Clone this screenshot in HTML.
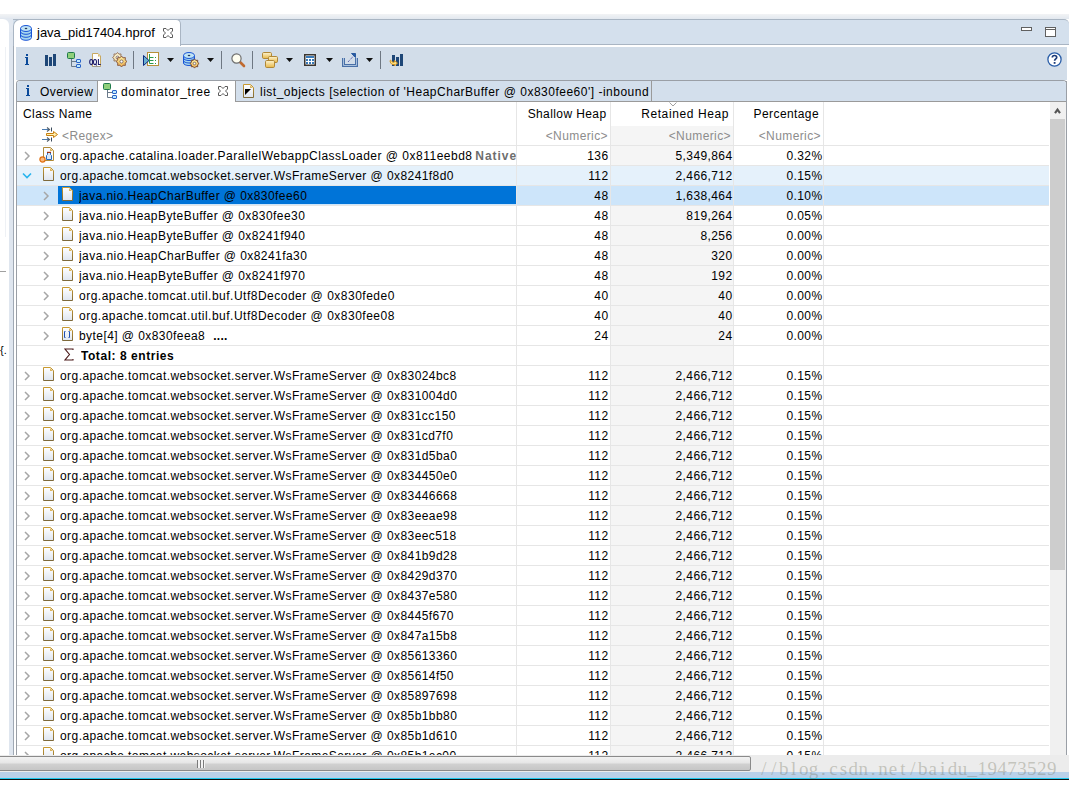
<!DOCTYPE html>
<html><head><meta charset="utf-8"><style>
html,body{margin:0;padding:0;}
body{width:1069px;height:789px;overflow:hidden;position:relative;background:#fff;font-family:"Liberation Sans", sans-serif;font-size:12px;color:#000;}
.a{position:absolute;}
.row{position:absolute;left:0;width:1049px;height:20px;}
.row::after{content:"";position:absolute;left:17px;right:0;top:19px;height:1px;background:#e6e6e6;}
.hot{background:linear-gradient(to right,transparent 17px,#e5f1fb 17px);}
.sel{background:linear-gradient(to right,transparent 17px,#cde5fa 17px);}
.t{position:absolute;top:0;height:20px;line-height:20px;white-space:nowrap;overflow:hidden;letter-spacing:0.43px;}
.n{position:absolute;top:0;height:20px;line-height:20px;white-space:nowrap;letter-spacing:0.4px;text-align:right;}
.f{position:absolute;height:20px;line-height:20px;white-space:nowrap;color:#8c8c8c;letter-spacing:0.4px;}
.h{position:absolute;height:20px;line-height:20px;white-space:nowrap;letter-spacing:0.4px;}
</style></head><body>
<svg width="0" height="0" style="position:absolute"><defs>
<linearGradient id="dfill" x1="0" y1="0" x2="0" y2="1"><stop offset="0" stop-color="#fff"/><stop offset="1" stop-color="#dfe6f0"/></linearGradient>
<linearGradient id="dstroke" x1="0" y1="0" x2="0" y2="1"><stop offset="0" stop-color="#c99a30"/><stop offset="1" stop-color="#7f6a3a"/></linearGradient>
</defs></svg>

<!-- top band -->
<div class="a" style="left:0;top:14px;width:1069px;height:5px;background:linear-gradient(#f2f3f5,#e2e8ef)"></div>
<!-- left strip -->
<div class="a" style="left:9px;top:19px;width:4px;height:736px;background:#dfe6ef"></div>
<div class="a" style="left:0;top:18px;width:13px;height:14px;background:#e2e8f0"></div><div class="a" style="left:-3px;top:19px;width:12px;height:736px;background:#fff;border-top-right-radius:6px"></div>
<div class="a" style="left:5px;top:47px;width:1px;height:190px;background:#eef1f5"></div>
<div class="a" style="left:0;top:271px;width:6px;height:1px;background:#a0a0a0"></div>
<div class="a" style="left:0;top:345px;font-size:11px;line-height:11px">{.</div>

<!-- editor tab bar -->
<div class="a" style="left:13px;top:19px;width:1056px;height:24px;background:#d4e0ed;border-top:1px solid #a9b5c3;border-bottom:1px solid #a9b5c3;border-top-right-radius:5px"></div>
<!-- editor content white with left border -->
<div class="a" style="left:13px;top:45px;width:1056px;height:710px;background:#fff;border-left:1px solid #a0a9b4;box-sizing:border-box"></div>
<!-- active editor tab -->
<div class="a" style="left:13px;top:19px;width:168px;height:27px;background:#fff;border:1px solid #a9b5c3;border-bottom:none;border-radius:7px 5px 0 0;box-sizing:border-box"></div>
<div class="a" style="left:37px;top:22px;height:22px;line-height:22px;font-size:13px;letter-spacing:0px">java_pid17404.hprof</div>

<!-- form area -->
<div class="a" style="left:16px;top:47px;width:1051px;height:33px;background:#d2dde9"></div>
<!-- inner tab folder -->
<div class="a" style="left:16px;top:80px;width:1051px;height:675px;border:1px solid #9a9fa6;border-bottom:none;border-radius:4px 4px 0 0;box-sizing:border-box;background:#fff"></div>
<div class="a" style="left:17px;top:81px;width:1049px;height:20px;background:#d3dfec;border-bottom:1px solid #9a9a9a;border-radius:3px 3px 0 0"></div>
<!-- tabs -->
<div class="a" style="left:97px;top:81px;width:1px;height:21px;background:#9a9a9a"></div>
<div class="a" style="left:98px;top:81px;width:137px;height:21px;background:#fff"></div>
<div class="a" style="left:235px;top:81px;width:1px;height:21px;background:#9a9a9a"></div>
<div class="a" style="left:651px;top:81px;width:1px;height:21px;background:#9a9a9a"></div>
<div class="a h" style="left:40px;top:82px">Overview</div>
<div class="a h" style="left:121px;top:82px;letter-spacing:0.65px">dominator_tree</div>
<div class="a h" style="left:260px;top:82px;letter-spacing:0.5px">list_objects [selection of 'HeapCharBuffer @ 0x830fee60'] -inbound</div>

<!-- table header -->
<div class="a" style="left:611px;top:126px;width:122px;height:629px;background:#f5f5f5"></div>
<div class="a" style="left:17px;top:145px;width:1032px;height:1px;background:#e6e6e6"></div>
<div class="h" style="left:23px;top:104px">Class Name</div>
<div class="h" style="left:517px;top:104px;width:89.5px;text-align:right">Shallow Heap</div>
<div class="h" style="left:611px;top:104px;width:118px;text-align:right;letter-spacing:0.6px">Retained Heap</div>
<div class="h" style="left:734px;top:104px;width:85px;text-align:right">Percentage</div>
<div class="f" style="left:62px;top:126px">&lt;Regex&gt;</div>
<div class="f" style="left:517px;top:126px;width:91px;text-align:right">&lt;Numeric&gt;</div>
<div class="f" style="left:611px;top:126px;width:120px;text-align:right">&lt;Numeric&gt;</div>
<div class="f" style="left:734px;top:126px;width:87px;text-align:right">&lt;Numeric&gt;</div>

<div class="a" style="left:0;top:0;width:1069px;height:755px;overflow:hidden">
<div class="row" style="top:146px">
<svg class="a" width="7" height="10" style="left:24px;top:5px"><path d="M1 1L5 5L1 9" fill="none" stroke="#a6a6a6" stroke-width="1.5"/></svg>
<svg class="a" width="15" height="16" style="left:39px;top:1px"><path d="M4.5 0.5H11.5L14.5 3.5V13.5H4.5Z" fill="#fbfcfe" stroke="#b08a38"/><path d="M11 1V4H14Z" fill="#dcb660"/><path d="M8 5.5H12" stroke="#a03010" stroke-width="1.4"/><path d="M8.5 6V7.5L7.5 8.5V12.5H12.5V8.5L11.5 7.5V6" fill="#dbe9f8" stroke="#2a6ab8"/><circle cx="3.5" cy="12.5" r="2.6" fill="#f8b880" stroke="#e07010" stroke-width="1.2"/></svg>
<div class="t" style="left:60px;width:456px;letter-spacing:0.5px;">org.apache.catalina.loader.ParallelWebappClassLoader @ 0x811eebd8 <b style="color:#6e6e6e;letter-spacing:0.95px;margin-left:-1px">Native</b></div>
<div class="n" style="left:517px;width:91.5px">136</div>
<div class="n" style="left:611px;width:121.5px">5,349,864</div>
<div class="n" style="left:734px;width:88.5px">0.32%</div>
</div>
<div class="row hot" style="top:166px">
<svg class="a" width="11" height="8" style="left:22px;top:6px"><path d="M1 1.5L5 5.5L9 1.5" fill="none" stroke="#28b4ee" stroke-width="1.6"/></svg>
<svg class="a" width="11" height="14" style="left:43px;top:1px"><path d="M0.5 0.5H7.5L10.5 3.5V13.5H0.5Z" fill="url(#dfill)" stroke="url(#dstroke)"/><path d="M7 1V4H10Z" fill="#dcb660"/></svg>
<div class="t" style="left:60px;width:456px;">org.apache.tomcat.websocket.server.WsFrameServer @ 0x8241f8d0</div>
<div class="n" style="left:517px;width:91.5px">112</div>
<div class="n" style="left:611px;width:121.5px">2,466,712</div>
<div class="n" style="left:734px;width:88.5px">0.15%</div>
</div>
<div class="row sel" style="top:186px">
<div class="a" style="left:58px;top:0;width:458px;height:18px;background:#0074d8"></div>
<svg class="a" width="7" height="10" style="left:43px;top:5px"><path d="M1 1L5 5L1 9" fill="none" stroke="#a6a6a6" stroke-width="1.5"/></svg>
<svg class="a" width="11" height="14" style="left:62px;top:1px"><path d="M0.5 0.5H7.5L10.5 3.5V13.5H0.5Z" fill="url(#dfill)" stroke="url(#dstroke)"/><path d="M7 1V4H10Z" fill="#dcb660"/></svg>
<div class="t" style="left:79px;width:437px;">java.nio.HeapCharBuffer @ 0x830fee60</div>
<div class="n" style="left:517px;width:91.5px">48</div>
<div class="n" style="left:611px;width:121.5px">1,638,464</div>
<div class="n" style="left:734px;width:88.5px">0.10%</div>
</div>
<div class="row" style="top:206px">
<svg class="a" width="7" height="10" style="left:43px;top:5px"><path d="M1 1L5 5L1 9" fill="none" stroke="#a6a6a6" stroke-width="1.5"/></svg>
<svg class="a" width="11" height="14" style="left:62px;top:1px"><path d="M0.5 0.5H7.5L10.5 3.5V13.5H0.5Z" fill="url(#dfill)" stroke="url(#dstroke)"/><path d="M7 1V4H10Z" fill="#dcb660"/></svg>
<div class="t" style="left:79px;width:437px;">java.nio.HeapByteBuffer @ 0x830fee30</div>
<div class="n" style="left:517px;width:91.5px">48</div>
<div class="n" style="left:611px;width:121.5px">819,264</div>
<div class="n" style="left:734px;width:88.5px">0.05%</div>
</div>
<div class="row" style="top:226px">
<svg class="a" width="7" height="10" style="left:43px;top:5px"><path d="M1 1L5 5L1 9" fill="none" stroke="#a6a6a6" stroke-width="1.5"/></svg>
<svg class="a" width="11" height="14" style="left:62px;top:1px"><path d="M0.5 0.5H7.5L10.5 3.5V13.5H0.5Z" fill="url(#dfill)" stroke="url(#dstroke)"/><path d="M7 1V4H10Z" fill="#dcb660"/></svg>
<div class="t" style="left:79px;width:437px;">java.nio.HeapByteBuffer @ 0x8241f940</div>
<div class="n" style="left:517px;width:91.5px">48</div>
<div class="n" style="left:611px;width:121.5px">8,256</div>
<div class="n" style="left:734px;width:88.5px">0.00%</div>
</div>
<div class="row" style="top:246px">
<svg class="a" width="7" height="10" style="left:43px;top:5px"><path d="M1 1L5 5L1 9" fill="none" stroke="#a6a6a6" stroke-width="1.5"/></svg>
<svg class="a" width="11" height="14" style="left:62px;top:1px"><path d="M0.5 0.5H7.5L10.5 3.5V13.5H0.5Z" fill="url(#dfill)" stroke="url(#dstroke)"/><path d="M7 1V4H10Z" fill="#dcb660"/></svg>
<div class="t" style="left:79px;width:437px;">java.nio.HeapCharBuffer @ 0x8241fa30</div>
<div class="n" style="left:517px;width:91.5px">48</div>
<div class="n" style="left:611px;width:121.5px">320</div>
<div class="n" style="left:734px;width:88.5px">0.00%</div>
</div>
<div class="row" style="top:266px">
<svg class="a" width="7" height="10" style="left:43px;top:5px"><path d="M1 1L5 5L1 9" fill="none" stroke="#a6a6a6" stroke-width="1.5"/></svg>
<svg class="a" width="11" height="14" style="left:62px;top:1px"><path d="M0.5 0.5H7.5L10.5 3.5V13.5H0.5Z" fill="url(#dfill)" stroke="url(#dstroke)"/><path d="M7 1V4H10Z" fill="#dcb660"/></svg>
<div class="t" style="left:79px;width:437px;">java.nio.HeapByteBuffer @ 0x8241f970</div>
<div class="n" style="left:517px;width:91.5px">48</div>
<div class="n" style="left:611px;width:121.5px">192</div>
<div class="n" style="left:734px;width:88.5px">0.00%</div>
</div>
<div class="row" style="top:286px">
<svg class="a" width="7" height="10" style="left:43px;top:5px"><path d="M1 1L5 5L1 9" fill="none" stroke="#a6a6a6" stroke-width="1.5"/></svg>
<svg class="a" width="11" height="14" style="left:62px;top:1px"><path d="M0.5 0.5H7.5L10.5 3.5V13.5H0.5Z" fill="url(#dfill)" stroke="url(#dstroke)"/><path d="M7 1V4H10Z" fill="#dcb660"/></svg>
<div class="t" style="left:79px;width:437px;letter-spacing:0.5px;">org.apache.tomcat.util.buf.Utf8Decoder @ 0x830fede0</div>
<div class="n" style="left:517px;width:91.5px">40</div>
<div class="n" style="left:611px;width:121.5px">40</div>
<div class="n" style="left:734px;width:88.5px">0.00%</div>
</div>
<div class="row" style="top:306px">
<svg class="a" width="7" height="10" style="left:43px;top:5px"><path d="M1 1L5 5L1 9" fill="none" stroke="#a6a6a6" stroke-width="1.5"/></svg>
<svg class="a" width="11" height="14" style="left:62px;top:1px"><path d="M0.5 0.5H7.5L10.5 3.5V13.5H0.5Z" fill="url(#dfill)" stroke="url(#dstroke)"/><path d="M7 1V4H10Z" fill="#dcb660"/></svg>
<div class="t" style="left:79px;width:437px;letter-spacing:0.5px;">org.apache.tomcat.util.buf.Utf8Decoder @ 0x830fee08</div>
<div class="n" style="left:517px;width:91.5px">40</div>
<div class="n" style="left:611px;width:121.5px">40</div>
<div class="n" style="left:734px;width:88.5px">0.00%</div>
</div>
<div class="row" style="top:326px">
<svg class="a" width="7" height="10" style="left:43px;top:5px"><path d="M1 1L5 5L1 9" fill="none" stroke="#a6a6a6" stroke-width="1.5"/></svg>
<svg class="a" width="11" height="14" style="left:62px;top:1px"><path d="M0.5 0.5H7.5L10.5 3.5V13.5H0.5Z" fill="url(#dfill)" stroke="url(#dstroke)"/><path d="M7 1V4H10Z" fill="#dcb660"/><path d="M3.5 4.5H2.5V10.5H3.5M6.5 4.5H7.5V10.5H6.5" fill="none" stroke="#2050b0"/></svg>
<div class="t" style="left:79px;width:437px;">byte[4] @ 0x830feea8<b style="margin-left:8px;letter-spacing:0.3px">....</b></div>
<div class="n" style="left:517px;width:91.5px">24</div>
<div class="n" style="left:611px;width:121.5px">24</div>
<div class="n" style="left:734px;width:88.5px">0.00%</div>
</div>
<div class="row" style="top:346px">
<svg class="a" width="10" height="14" style="left:64px;top:2px"><path d="M9 2V1H1L5.5 6.5L1 12H9V11" fill="none" stroke="#4a1818" stroke-width="1.1"/></svg>
<div class="t" style="left:81px;font-weight:bold;letter-spacing:0.55px">Total: 8 entries</div>
</div>
<div class="row" style="top:366px">
<svg class="a" width="7" height="10" style="left:24px;top:5px"><path d="M1 1L5 5L1 9" fill="none" stroke="#a6a6a6" stroke-width="1.5"/></svg>
<svg class="a" width="11" height="14" style="left:43px;top:1px"><path d="M0.5 0.5H7.5L10.5 3.5V13.5H0.5Z" fill="url(#dfill)" stroke="url(#dstroke)"/><path d="M7 1V4H10Z" fill="#dcb660"/></svg>
<div class="t" style="left:60px;width:456px;">org.apache.tomcat.websocket.server.WsFrameServer @ 0x83024bc8</div>
<div class="n" style="left:517px;width:91.5px">112</div>
<div class="n" style="left:611px;width:121.5px">2,466,712</div>
<div class="n" style="left:734px;width:88.5px">0.15%</div>
</div>
<div class="row" style="top:386px">
<svg class="a" width="7" height="10" style="left:24px;top:5px"><path d="M1 1L5 5L1 9" fill="none" stroke="#a6a6a6" stroke-width="1.5"/></svg>
<svg class="a" width="11" height="14" style="left:43px;top:1px"><path d="M0.5 0.5H7.5L10.5 3.5V13.5H0.5Z" fill="url(#dfill)" stroke="url(#dstroke)"/><path d="M7 1V4H10Z" fill="#dcb660"/></svg>
<div class="t" style="left:60px;width:456px;">org.apache.tomcat.websocket.server.WsFrameServer @ 0x831004d0</div>
<div class="n" style="left:517px;width:91.5px">112</div>
<div class="n" style="left:611px;width:121.5px">2,466,712</div>
<div class="n" style="left:734px;width:88.5px">0.15%</div>
</div>
<div class="row" style="top:406px">
<svg class="a" width="7" height="10" style="left:24px;top:5px"><path d="M1 1L5 5L1 9" fill="none" stroke="#a6a6a6" stroke-width="1.5"/></svg>
<svg class="a" width="11" height="14" style="left:43px;top:1px"><path d="M0.5 0.5H7.5L10.5 3.5V13.5H0.5Z" fill="url(#dfill)" stroke="url(#dstroke)"/><path d="M7 1V4H10Z" fill="#dcb660"/></svg>
<div class="t" style="left:60px;width:456px;">org.apache.tomcat.websocket.server.WsFrameServer @ 0x831cc150</div>
<div class="n" style="left:517px;width:91.5px">112</div>
<div class="n" style="left:611px;width:121.5px">2,466,712</div>
<div class="n" style="left:734px;width:88.5px">0.15%</div>
</div>
<div class="row" style="top:426px">
<svg class="a" width="7" height="10" style="left:24px;top:5px"><path d="M1 1L5 5L1 9" fill="none" stroke="#a6a6a6" stroke-width="1.5"/></svg>
<svg class="a" width="11" height="14" style="left:43px;top:1px"><path d="M0.5 0.5H7.5L10.5 3.5V13.5H0.5Z" fill="url(#dfill)" stroke="url(#dstroke)"/><path d="M7 1V4H10Z" fill="#dcb660"/></svg>
<div class="t" style="left:60px;width:456px;">org.apache.tomcat.websocket.server.WsFrameServer @ 0x831cd7f0</div>
<div class="n" style="left:517px;width:91.5px">112</div>
<div class="n" style="left:611px;width:121.5px">2,466,712</div>
<div class="n" style="left:734px;width:88.5px">0.15%</div>
</div>
<div class="row" style="top:446px">
<svg class="a" width="7" height="10" style="left:24px;top:5px"><path d="M1 1L5 5L1 9" fill="none" stroke="#a6a6a6" stroke-width="1.5"/></svg>
<svg class="a" width="11" height="14" style="left:43px;top:1px"><path d="M0.5 0.5H7.5L10.5 3.5V13.5H0.5Z" fill="url(#dfill)" stroke="url(#dstroke)"/><path d="M7 1V4H10Z" fill="#dcb660"/></svg>
<div class="t" style="left:60px;width:456px;">org.apache.tomcat.websocket.server.WsFrameServer @ 0x831d5ba0</div>
<div class="n" style="left:517px;width:91.5px">112</div>
<div class="n" style="left:611px;width:121.5px">2,466,712</div>
<div class="n" style="left:734px;width:88.5px">0.15%</div>
</div>
<div class="row" style="top:466px">
<svg class="a" width="7" height="10" style="left:24px;top:5px"><path d="M1 1L5 5L1 9" fill="none" stroke="#a6a6a6" stroke-width="1.5"/></svg>
<svg class="a" width="11" height="14" style="left:43px;top:1px"><path d="M0.5 0.5H7.5L10.5 3.5V13.5H0.5Z" fill="url(#dfill)" stroke="url(#dstroke)"/><path d="M7 1V4H10Z" fill="#dcb660"/></svg>
<div class="t" style="left:60px;width:456px;">org.apache.tomcat.websocket.server.WsFrameServer @ 0x834450e0</div>
<div class="n" style="left:517px;width:91.5px">112</div>
<div class="n" style="left:611px;width:121.5px">2,466,712</div>
<div class="n" style="left:734px;width:88.5px">0.15%</div>
</div>
<div class="row" style="top:486px">
<svg class="a" width="7" height="10" style="left:24px;top:5px"><path d="M1 1L5 5L1 9" fill="none" stroke="#a6a6a6" stroke-width="1.5"/></svg>
<svg class="a" width="11" height="14" style="left:43px;top:1px"><path d="M0.5 0.5H7.5L10.5 3.5V13.5H0.5Z" fill="url(#dfill)" stroke="url(#dstroke)"/><path d="M7 1V4H10Z" fill="#dcb660"/></svg>
<div class="t" style="left:60px;width:456px;">org.apache.tomcat.websocket.server.WsFrameServer @ 0x83446668</div>
<div class="n" style="left:517px;width:91.5px">112</div>
<div class="n" style="left:611px;width:121.5px">2,466,712</div>
<div class="n" style="left:734px;width:88.5px">0.15%</div>
</div>
<div class="row" style="top:506px">
<svg class="a" width="7" height="10" style="left:24px;top:5px"><path d="M1 1L5 5L1 9" fill="none" stroke="#a6a6a6" stroke-width="1.5"/></svg>
<svg class="a" width="11" height="14" style="left:43px;top:1px"><path d="M0.5 0.5H7.5L10.5 3.5V13.5H0.5Z" fill="url(#dfill)" stroke="url(#dstroke)"/><path d="M7 1V4H10Z" fill="#dcb660"/></svg>
<div class="t" style="left:60px;width:456px;">org.apache.tomcat.websocket.server.WsFrameServer @ 0x83eeae98</div>
<div class="n" style="left:517px;width:91.5px">112</div>
<div class="n" style="left:611px;width:121.5px">2,466,712</div>
<div class="n" style="left:734px;width:88.5px">0.15%</div>
</div>
<div class="row" style="top:526px">
<svg class="a" width="7" height="10" style="left:24px;top:5px"><path d="M1 1L5 5L1 9" fill="none" stroke="#a6a6a6" stroke-width="1.5"/></svg>
<svg class="a" width="11" height="14" style="left:43px;top:1px"><path d="M0.5 0.5H7.5L10.5 3.5V13.5H0.5Z" fill="url(#dfill)" stroke="url(#dstroke)"/><path d="M7 1V4H10Z" fill="#dcb660"/></svg>
<div class="t" style="left:60px;width:456px;">org.apache.tomcat.websocket.server.WsFrameServer @ 0x83eec518</div>
<div class="n" style="left:517px;width:91.5px">112</div>
<div class="n" style="left:611px;width:121.5px">2,466,712</div>
<div class="n" style="left:734px;width:88.5px">0.15%</div>
</div>
<div class="row" style="top:546px">
<svg class="a" width="7" height="10" style="left:24px;top:5px"><path d="M1 1L5 5L1 9" fill="none" stroke="#a6a6a6" stroke-width="1.5"/></svg>
<svg class="a" width="11" height="14" style="left:43px;top:1px"><path d="M0.5 0.5H7.5L10.5 3.5V13.5H0.5Z" fill="url(#dfill)" stroke="url(#dstroke)"/><path d="M7 1V4H10Z" fill="#dcb660"/></svg>
<div class="t" style="left:60px;width:456px;">org.apache.tomcat.websocket.server.WsFrameServer @ 0x841b9d28</div>
<div class="n" style="left:517px;width:91.5px">112</div>
<div class="n" style="left:611px;width:121.5px">2,466,712</div>
<div class="n" style="left:734px;width:88.5px">0.15%</div>
</div>
<div class="row" style="top:566px">
<svg class="a" width="7" height="10" style="left:24px;top:5px"><path d="M1 1L5 5L1 9" fill="none" stroke="#a6a6a6" stroke-width="1.5"/></svg>
<svg class="a" width="11" height="14" style="left:43px;top:1px"><path d="M0.5 0.5H7.5L10.5 3.5V13.5H0.5Z" fill="url(#dfill)" stroke="url(#dstroke)"/><path d="M7 1V4H10Z" fill="#dcb660"/></svg>
<div class="t" style="left:60px;width:456px;">org.apache.tomcat.websocket.server.WsFrameServer @ 0x8429d370</div>
<div class="n" style="left:517px;width:91.5px">112</div>
<div class="n" style="left:611px;width:121.5px">2,466,712</div>
<div class="n" style="left:734px;width:88.5px">0.15%</div>
</div>
<div class="row" style="top:586px">
<svg class="a" width="7" height="10" style="left:24px;top:5px"><path d="M1 1L5 5L1 9" fill="none" stroke="#a6a6a6" stroke-width="1.5"/></svg>
<svg class="a" width="11" height="14" style="left:43px;top:1px"><path d="M0.5 0.5H7.5L10.5 3.5V13.5H0.5Z" fill="url(#dfill)" stroke="url(#dstroke)"/><path d="M7 1V4H10Z" fill="#dcb660"/></svg>
<div class="t" style="left:60px;width:456px;">org.apache.tomcat.websocket.server.WsFrameServer @ 0x8437e580</div>
<div class="n" style="left:517px;width:91.5px">112</div>
<div class="n" style="left:611px;width:121.5px">2,466,712</div>
<div class="n" style="left:734px;width:88.5px">0.15%</div>
</div>
<div class="row" style="top:606px">
<svg class="a" width="7" height="10" style="left:24px;top:5px"><path d="M1 1L5 5L1 9" fill="none" stroke="#a6a6a6" stroke-width="1.5"/></svg>
<svg class="a" width="11" height="14" style="left:43px;top:1px"><path d="M0.5 0.5H7.5L10.5 3.5V13.5H0.5Z" fill="url(#dfill)" stroke="url(#dstroke)"/><path d="M7 1V4H10Z" fill="#dcb660"/></svg>
<div class="t" style="left:60px;width:456px;">org.apache.tomcat.websocket.server.WsFrameServer @ 0x8445f670</div>
<div class="n" style="left:517px;width:91.5px">112</div>
<div class="n" style="left:611px;width:121.5px">2,466,712</div>
<div class="n" style="left:734px;width:88.5px">0.15%</div>
</div>
<div class="row" style="top:626px">
<svg class="a" width="7" height="10" style="left:24px;top:5px"><path d="M1 1L5 5L1 9" fill="none" stroke="#a6a6a6" stroke-width="1.5"/></svg>
<svg class="a" width="11" height="14" style="left:43px;top:1px"><path d="M0.5 0.5H7.5L10.5 3.5V13.5H0.5Z" fill="url(#dfill)" stroke="url(#dstroke)"/><path d="M7 1V4H10Z" fill="#dcb660"/></svg>
<div class="t" style="left:60px;width:456px;">org.apache.tomcat.websocket.server.WsFrameServer @ 0x847a15b8</div>
<div class="n" style="left:517px;width:91.5px">112</div>
<div class="n" style="left:611px;width:121.5px">2,466,712</div>
<div class="n" style="left:734px;width:88.5px">0.15%</div>
</div>
<div class="row" style="top:646px">
<svg class="a" width="7" height="10" style="left:24px;top:5px"><path d="M1 1L5 5L1 9" fill="none" stroke="#a6a6a6" stroke-width="1.5"/></svg>
<svg class="a" width="11" height="14" style="left:43px;top:1px"><path d="M0.5 0.5H7.5L10.5 3.5V13.5H0.5Z" fill="url(#dfill)" stroke="url(#dstroke)"/><path d="M7 1V4H10Z" fill="#dcb660"/></svg>
<div class="t" style="left:60px;width:456px;">org.apache.tomcat.websocket.server.WsFrameServer @ 0x85613360</div>
<div class="n" style="left:517px;width:91.5px">112</div>
<div class="n" style="left:611px;width:121.5px">2,466,712</div>
<div class="n" style="left:734px;width:88.5px">0.15%</div>
</div>
<div class="row" style="top:666px">
<svg class="a" width="7" height="10" style="left:24px;top:5px"><path d="M1 1L5 5L1 9" fill="none" stroke="#a6a6a6" stroke-width="1.5"/></svg>
<svg class="a" width="11" height="14" style="left:43px;top:1px"><path d="M0.5 0.5H7.5L10.5 3.5V13.5H0.5Z" fill="url(#dfill)" stroke="url(#dstroke)"/><path d="M7 1V4H10Z" fill="#dcb660"/></svg>
<div class="t" style="left:60px;width:456px;">org.apache.tomcat.websocket.server.WsFrameServer @ 0x85614f50</div>
<div class="n" style="left:517px;width:91.5px">112</div>
<div class="n" style="left:611px;width:121.5px">2,466,712</div>
<div class="n" style="left:734px;width:88.5px">0.15%</div>
</div>
<div class="row" style="top:686px">
<svg class="a" width="7" height="10" style="left:24px;top:5px"><path d="M1 1L5 5L1 9" fill="none" stroke="#a6a6a6" stroke-width="1.5"/></svg>
<svg class="a" width="11" height="14" style="left:43px;top:1px"><path d="M0.5 0.5H7.5L10.5 3.5V13.5H0.5Z" fill="url(#dfill)" stroke="url(#dstroke)"/><path d="M7 1V4H10Z" fill="#dcb660"/></svg>
<div class="t" style="left:60px;width:456px;">org.apache.tomcat.websocket.server.WsFrameServer @ 0x85897698</div>
<div class="n" style="left:517px;width:91.5px">112</div>
<div class="n" style="left:611px;width:121.5px">2,466,712</div>
<div class="n" style="left:734px;width:88.5px">0.15%</div>
</div>
<div class="row" style="top:706px">
<svg class="a" width="7" height="10" style="left:24px;top:5px"><path d="M1 1L5 5L1 9" fill="none" stroke="#a6a6a6" stroke-width="1.5"/></svg>
<svg class="a" width="11" height="14" style="left:43px;top:1px"><path d="M0.5 0.5H7.5L10.5 3.5V13.5H0.5Z" fill="url(#dfill)" stroke="url(#dstroke)"/><path d="M7 1V4H10Z" fill="#dcb660"/></svg>
<div class="t" style="left:60px;width:456px;">org.apache.tomcat.websocket.server.WsFrameServer @ 0x85b1bb80</div>
<div class="n" style="left:517px;width:91.5px">112</div>
<div class="n" style="left:611px;width:121.5px">2,466,712</div>
<div class="n" style="left:734px;width:88.5px">0.15%</div>
</div>
<div class="row" style="top:726px">
<svg class="a" width="7" height="10" style="left:24px;top:5px"><path d="M1 1L5 5L1 9" fill="none" stroke="#a6a6a6" stroke-width="1.5"/></svg>
<svg class="a" width="11" height="14" style="left:43px;top:1px"><path d="M0.5 0.5H7.5L10.5 3.5V13.5H0.5Z" fill="url(#dfill)" stroke="url(#dstroke)"/><path d="M7 1V4H10Z" fill="#dcb660"/></svg>
<div class="t" style="left:60px;width:456px;">org.apache.tomcat.websocket.server.WsFrameServer @ 0x85b1d610</div>
<div class="n" style="left:517px;width:91.5px">112</div>
<div class="n" style="left:611px;width:121.5px">2,466,712</div>
<div class="n" style="left:734px;width:88.5px">0.15%</div>
</div>
<div class="row" style="top:746px">
<svg class="a" width="7" height="10" style="left:24px;top:5px"><path d="M1 1L5 5L1 9" fill="none" stroke="#a6a6a6" stroke-width="1.5"/></svg>
<svg class="a" width="11" height="14" style="left:43px;top:1px"><path d="M0.5 0.5H7.5L10.5 3.5V13.5H0.5Z" fill="url(#dfill)" stroke="url(#dstroke)"/><path d="M7 1V4H10Z" fill="#dcb660"/></svg>
<div class="t" style="left:60px;width:456px;">org.apache.tomcat.websocket.server.WsFrameServer @ 0x85b1ec00</div>
<div class="n" style="left:517px;width:91.5px">112</div>
<div class="n" style="left:611px;width:121.5px">2,466,712</div>
<div class="n" style="left:734px;width:88.5px">0.15%</div>
</div>
</div>
<div class="a" style="left:516px;top:102px;width:1px;height:653px;background:#e6e6e6"></div>
<div class="a" style="left:610px;top:102px;width:1px;height:653px;background:#e6e6e6"></div>
<div class="a" style="left:733px;top:102px;width:1px;height:653px;background:#e6e6e6"></div>
<div class="a" style="left:823px;top:102px;width:1px;height:653px;background:#e6e6e6"></div>

<!-- vertical scrollbar -->
<div class="a" style="left:1050px;top:102px;width:16px;height:653px;background:#f0f0f0"></div>
<div class="a" style="left:1050px;top:119px;width:15px;height:451px;background:#cdcdcd"></div>
<svg class="a" width="16" height="16" style="left:1050px;top:103px"><path d="M5 10.2L7.5 6.6L10 10.2" fill="none" stroke="#555" stroke-width="2.1"/></svg>
<div class="a" style="left:1066px;top:81px;width:1px;height:674px;background:#9a9fa6"></div>

<!-- horizontal scrollbar -->
<div class="a" style="left:0;top:755px;width:1069px;height:17px;background:#ececec"></div>
<div class="a" style="left:-2px;top:756px;width:753px;height:15px;box-sizing:border-box;border:1px solid #8a8a8a;border-radius:2px;background:linear-gradient(#f2f2f2 0%,#e6e6e6 45%,#d0d0d0 55%,#c6c6c6 100%)"></div>
<div class="a" style="left:0;top:772px;width:1069px;height:6px;background:#b9d1ea"></div>
<div class="a" style="left:0;top:778px;width:1069px;height:1px;background:#1ec8ee"></div>
<div class="a" style="left:0;top:779px;width:1069px;height:1px;background:#101010"></div>
<div class="a" style="left:759px;top:757.5px;font-family:'Liberation Serif',serif;font-size:19px;line-height:22px;color:rgba(120,120,100,0.36);white-space:nowrap"><span style="display:inline-block;width:9.93px;text-align:center">/</span><span style="display:inline-block;width:9.93px;text-align:center">/</span><span style="display:inline-block;width:9.93px;text-align:center">b</span><span style="display:inline-block;width:9.93px;text-align:center">l</span><span style="display:inline-block;width:9.93px;text-align:center">o</span><span style="display:inline-block;width:9.93px;text-align:center">g</span><span style="display:inline-block;width:9.93px;text-align:center">.</span><span style="display:inline-block;width:9.93px;text-align:center">c</span><span style="display:inline-block;width:9.93px;text-align:center">s</span><span style="display:inline-block;width:9.93px;text-align:center">d</span><span style="display:inline-block;width:9.93px;text-align:center">n</span><span style="display:inline-block;width:9.93px;text-align:center">.</span><span style="display:inline-block;width:9.93px;text-align:center">n</span><span style="display:inline-block;width:9.93px;text-align:center">e</span><span style="display:inline-block;width:9.93px;text-align:center">t</span><span style="display:inline-block;width:9.93px;text-align:center">/</span><span style="display:inline-block;width:9.93px;text-align:center">b</span><span style="display:inline-block;width:9.93px;text-align:center">a</span><span style="display:inline-block;width:9.93px;text-align:center">i</span><span style="display:inline-block;width:9.93px;text-align:center">d</span><span style="display:inline-block;width:9.93px;text-align:center">u</span><span style="display:inline-block;width:9.93px;text-align:center">_</span><span style="display:inline-block;width:9.93px;text-align:center">1</span><span style="display:inline-block;width:9.93px;text-align:center">9</span><span style="display:inline-block;width:9.93px;text-align:center">4</span><span style="display:inline-block;width:9.93px;text-align:center">7</span><span style="display:inline-block;width:9.93px;text-align:center">3</span><span style="display:inline-block;width:9.93px;text-align:center">5</span><span style="display:inline-block;width:9.93px;text-align:center">2</span><span style="display:inline-block;width:9.93px;text-align:center">9</span></div>
<div class="a" style="left:197px;top:760px;width:8px;height:8px;background:repeating-linear-gradient(to right,#7a7a7a 0 1px,#f4f4f4 1px 3px)"></div>
<svg class="a" width="12" height="16" viewBox="0 0 12 16" style="left:20px;top:25px"><path d="M0.5 3.5V12.5A5.5 2.8 0 0 0 11.5 12.5V3.5" fill="#a6d6ee" stroke="#1a55d6"/><path d="M0.5 6.5A5.5 2.8 0 0 0 11.5 6.5M0.5 9.5A5.5 2.8 0 0 0 11.5 9.5" fill="none" stroke="#1a55d6"/><ellipse cx="6" cy="3.5" rx="5.5" ry="3" fill="#bfe3f5" stroke="#1a55d6"/><ellipse cx="6" cy="3.5" rx="1.3" ry="0.7" fill="#2a3a5a"/></svg><svg class="a" width="10" height="10" viewBox="0 0 10 10" style="left:163px;top:28px"><path d="M0.5 0.5H3L5 2.5L7 0.5H9.5V3L7.5 5L9.5 7V9.5H7L5 7.5L3 9.5H0.5V7L2.5 5L0.5 3Z" fill="none" stroke="#5a5a5a" stroke-width="1"/></svg><svg class="a" width="5" height="11" viewBox="0 0 5 11" style="left:25px;top:54px"><rect x="1" y="0" width="2" height="2" fill="#0b4a9a"/><path d="M0 3H3V10H4V11H0V10H1V4H0Z" fill="#0b4a9a"/></svg><svg class="a" width="11" height="12" viewBox="0 0 11 12" style="left:45px;top:54px"><rect x="0" y="1" width="3" height="11" fill="#1d4677"/><rect x="4" y="3" width="3" height="9" fill="#1d4677"/><rect x="8" y="0" width="3" height="12" fill="#1d4677"/></svg><svg class="a" width="14" height="16" viewBox="0 0 14 16" style="left:67px;top:52px"><rect x="0.5" y="0.5" width="7" height="6" rx="1" fill="#8fcf7a" stroke="#1e7a4a"/><path d="M4.5 7V14.5H9M4.5 9.5H9" fill="none" stroke="#6a7a8a"/><rect x="9.5" y="7.5" width="4" height="3" rx="0.5" fill="#bfeaff" stroke="#2a64c8"/><rect x="9.5" y="12.5" width="4" height="3" rx="0.5" fill="#bfeaff" stroke="#2a64c8"/></svg><svg class="a" width="12" height="14" viewBox="0 0 12 14" style="left:89px;top:53px"><path d="M3.5 0.5H9L11.5 3V13.5H3.5Z" fill="#fdfdfd" stroke="#c8a860"/><path d="M9 1V3.5H11Z" fill="#e0b860"/><path d="M3.5 13.5H11.5" stroke="#a09a8a"/><g fill="none" stroke="#1a1a6a" stroke-width="1.05"><ellipse cx="2.2" cy="9" rx="1.5" ry="2.6"/><ellipse cx="6" cy="9" rx="1.5" ry="2.6"/><path d="M6.5 11L7.8 12.5M9.4 6V11.5H11.8"/></g></svg><svg class="a" width="16" height="16" viewBox="0 0 16 16" style="left:112px;top:52px"><defs><linearGradient id="g1" x1="0" y1="0" x2="0" y2="1"><stop offset="0" stop-color="#fff8d8"/><stop offset="1" stop-color="#f0d8a0"/></linearGradient></defs><path d="M10.50 5.50L8.83 6.88L9.04 9.04L6.88 8.83L5.50 10.50L4.12 8.83L1.96 9.04L2.17 6.88L0.50 5.50L2.17 4.12L1.96 1.96L4.12 2.17L5.50 0.50L6.88 2.17L9.04 1.96L8.83 4.12Z" fill="url(#g1)" stroke="#9a7a60" stroke-width="1" stroke-linejoin="round"/><circle cx="5.5" cy="5.5" r="1.40" fill="#fff" stroke="#6a5a5a" stroke-width="0.8"/><defs><linearGradient id="g2" x1="0" y1="0" x2="0" y2="1"><stop offset="0" stop-color="#fdf0a0"/><stop offset="1" stop-color="#f0b050"/></linearGradient></defs><path d="M15.00 9.50L13.16 11.02L13.39 13.39L11.02 13.16L9.50 15.00L7.98 13.16L5.61 13.39L5.84 11.02L4.00 9.50L5.84 7.98L5.61 5.61L7.98 5.84L9.50 4.00L11.02 5.84L13.39 5.61L13.16 7.98Z" fill="url(#g2)" stroke="#8a5a40" stroke-width="1" stroke-linejoin="round"/><circle cx="9.5" cy="9.5" r="1.54" fill="#fff" stroke="#6a5a5a" stroke-width="0.8"/></svg><div class="a" style="left:133px;top:51px;width:1px;height:18px;background:#6e7782"></div><svg class="a" width="16" height="15" viewBox="0 0 16 15" style="left:143px;top:52px"><rect x="4.5" y="0.5" width="11" height="13" fill="#fff" stroke="#b8903a"/><path d="M6.5 2V11.5H10.5M6.5 5.5H10.5M6.5 8.5H10.5" fill="none" stroke="#2a9a4a"/><rect x="12" y="5" width="1" height="1" fill="#2a9a4a"/><rect x="12" y="8" width="1" height="1" fill="#2a9a4a"/><rect x="12" y="11" width="1" height="1" fill="#2a9a4a"/><path d="M0.5 3.5L6 8.5L0.5 13.5Z" fill="#6ab0d0" stroke="#0a2a80"/></svg><svg class="a" width="7" height="4" viewBox="0 0 7 4" style="left:167px;top:58px"><path d="M0 0H7L3.5 4Z" fill="#111"/></svg><svg class="a" width="17" height="17" viewBox="0 0 17 17" style="left:183px;top:52px"><path d="M0.5 3.5V11A5.5 2.5 0 0 0 11.5 11V3.5" fill="#a6d6ee" stroke="#1a55d6"/><path d="M0.5 6A5.5 2.5 0 0 0 11.5 6M0.5 8.5A5.5 2.5 0 0 0 11.5 8.5" fill="none" stroke="#1a55d6"/><ellipse cx="6" cy="3.5" rx="5.5" ry="3" fill="#bfe3f5" stroke="#1a55d6"/><ellipse cx="6" cy="3.5" rx="1.3" ry="0.7" fill="#2a3a5a"/><defs><linearGradient id="g3" x1="0" y1="0" x2="0" y2="1"><stop offset="0" stop-color="#fdf0a0"/><stop offset="1" stop-color="#f0b050"/></linearGradient></defs><path d="M16.10 11.50L14.56 12.77L14.75 14.75L12.77 14.56L11.50 16.10L10.23 14.56L8.25 14.75L8.44 12.77L6.90 11.50L8.44 10.23L8.25 8.25L10.23 8.44L11.50 6.90L12.77 8.44L14.75 8.25L14.56 10.23Z" fill="url(#g3)" stroke="#7a4a30" stroke-width="1" stroke-linejoin="round"/><circle cx="11.5" cy="11.5" r="1.29" fill="#fff" stroke="#6a5a5a" stroke-width="0.8"/></svg><svg class="a" width="7" height="4" viewBox="0 0 7 4" style="left:207px;top:58px"><path d="M0 0H7L3.5 4Z" fill="#111"/></svg><div class="a" style="left:221px;top:51px;width:1px;height:18px;background:#6e7782"></div><svg class="a" width="15" height="15" viewBox="0 0 15 15" style="left:231px;top:53px"><path d="M9 9L13 13" stroke="#c06a30" stroke-width="2.6" stroke-linecap="round"/><circle cx="5.5" cy="5.5" r="4.6" fill="#fffef0" stroke="#6e6e6e" stroke-width="1.2"/></svg><div class="a" style="left:252px;top:51px;width:1px;height:18px;background:#6e7782"></div><svg class="a" width="16" height="16" viewBox="0 0 16 16" style="left:262px;top:52px"><defs><linearGradient id="gy" x1="0" y1="0" x2="0" y2="1"><stop offset="0" stop-color="#fdf4d0"/><stop offset="1" stop-color="#e8b848"/></linearGradient></defs><rect x="0.5" y="0.5" width="9" height="6" rx="1.2" fill="url(#gy)" stroke="#b08838"/><rect x="6.5" y="4.5" width="9" height="6" rx="1.2" fill="url(#gy)" stroke="#b08838"/><rect x="3.5" y="8.5" width="9" height="7" rx="1.2" fill="url(#gy)" stroke="#b08838"/></svg><svg class="a" width="7" height="4" viewBox="0 0 7 4" style="left:286px;top:58px"><path d="M0 0H7L3.5 4Z" fill="#111"/></svg><svg class="a" width="12" height="12" viewBox="0 0 12 12" style="left:304px;top:54px"><rect x="0.75" y="0.75" width="10.5" height="10.5" fill="#fff" stroke="#3a3530" stroke-width="1.5"/><rect x="2" y="2" width="8" height="2" fill="#3a7ab8"/><g fill="#3a7ab8"><rect x="2" y="5" width="2" height="2"/><rect x="5" y="5" width="2" height="2"/><rect x="8" y="5" width="2" height="2"/><rect x="2" y="8" width="2" height="2"/><rect x="5" y="8" width="2" height="2"/><rect x="8" y="8" width="2" height="2"/></g></svg><svg class="a" width="7" height="4" viewBox="0 0 7 4" style="left:326px;top:58px"><path d="M0 0H7L3.5 4Z" fill="#111"/></svg><svg class="a" width="16" height="14" viewBox="0 0 16 14" style="left:342px;top:53px"><path d="M1.5 5V12.5H14.5V5" fill="none" stroke="#4a70a8" stroke-width="3"/><path d="M1.5 5V12.5H14.5V5" fill="none" stroke="#a8c0dc" stroke-width="1"/><path d="M6 9L12 2.5" stroke="#3a3aa0" stroke-width="1" stroke-dasharray="1 1"/><path d="M9.5 0.5H13.5V4.5Z" fill="#2a5aa0" stroke="#2a5aa0" stroke-width="1"/></svg><svg class="a" width="7" height="4" viewBox="0 0 7 4" style="left:366px;top:58px"><path d="M0 0H7L3.5 4Z" fill="#111"/></svg><div class="a" style="left:380px;top:51px;width:1px;height:18px;background:#6e7782"></div><svg class="a" width="15" height="14" viewBox="0 0 15 14" style="left:389px;top:54px"><rect x="3" y="1" width="3" height="11" fill="#1d4677"/><rect x="7" y="3" width="3" height="9" fill="#1d4677"/><rect x="11" y="0" width="3" height="12" fill="#1d4677"/><path d="M1 7C1 6 2 6 2.5 7C3 8 4 8.5 5.5 8V6.5L8.5 9L5.5 12V10.5C3.5 11 1.5 10 1 7Z" fill="#fde080" stroke="#d08a10" stroke-width="0.9"/></svg><svg class="a" width="15" height="15" viewBox="0 0 15 15" style="left:1047px;top:52px"><circle cx="7.5" cy="7.5" r="6.6" fill="#fff" stroke="#2a5ea8" stroke-width="1.3"/><path d="M5.3 5.6C5.3 4.2 6.3 3.5 7.5 3.5C8.8 3.5 9.7 4.3 9.7 5.4C9.7 6.9 7.6 7 7.6 8.8" fill="none" stroke="#1a3a78" stroke-width="1.7"/><rect x="6.7" y="10" width="1.8" height="1.8" fill="#1a3a78"/></svg><svg class="a" width="5" height="11" viewBox="0 0 5 11" style="left:26px;top:85px"><rect x="1" y="0" width="2" height="2" fill="#0b4a9a"/><path d="M0 3H3V10H4V11H0V10H1V4H0Z" fill="#0b4a9a"/></svg><svg class="a" width="14" height="16" viewBox="0 0 14 16" style="left:103px;top:83px"><rect x="0.5" y="0.5" width="7" height="6" rx="1" fill="#8fcf7a" stroke="#1e7a4a"/><path d="M4.5 7V14.5H9M4.5 9.5H9" fill="none" stroke="#6a7a8a"/><rect x="9.5" y="7.5" width="4" height="3" rx="0.5" fill="#bfeaff" stroke="#2a64c8"/><rect x="9.5" y="12.5" width="4" height="3" rx="0.5" fill="#bfeaff" stroke="#2a64c8"/></svg><svg class="a" width="10" height="10" viewBox="0 0 10 10" style="left:218px;top:86px"><path d="M0.5 0.5H3L5 2.5L7 0.5H9.5V3L7.5 5L9.5 7V9.5H7L5 7.5L3 9.5H0.5V7L2.5 5L0.5 3Z" fill="none" stroke="#5a5a5a" stroke-width="1"/></svg><svg class="a" width="11" height="14" viewBox="0 0 11 14" style="left:243px;top:84px"><path d="M0.5 0.5H7.5L10.5 3.5V13.5H0.5Z" fill="url(#dfill)" stroke="url(#dstroke)"/><path d="M7 1V4H10Z" fill="#dcb660"/><path d="M2 5H8L2 11Z" fill="#000"/></svg><svg class="a" width="16" height="15" viewBox="0 0 16 15" style="left:42px;top:127px"><path d="M0 2.5H7M0 12.5H7" stroke="#4a7ab0" stroke-width="1"/><path d="M5 0.5L7.5 2.5L5 4.5M5 10.5L7.5 12.5L5 14.5" fill="none" stroke="#55606a" stroke-width="1.1"/><path d="M9.5 0.5V4.5M9.5 10.5V14.5" stroke="#3a4a5a" stroke-width="1"/><path d="M4.5 6.5H11.5V4.5L15.5 7.5L11.5 10.5V8.5H4.5Z" fill="#fff0b0" stroke="#c88010" stroke-width="1" stroke-linejoin="round"/></svg><svg class="a" width="11" height="5" viewBox="0 0 11 5" style="left:1021px;top:27px"><rect x="0.5" y="0.5" width="10" height="3" fill="#fff" stroke="#606060"/></svg><svg class="a" width="11" height="10" viewBox="0 0 11 10" style="left:1045px;top:27px"><rect x="0.5" y="0.5" width="10" height="9" fill="#fff" stroke="#606060"/><path d="M1 2.5H10" stroke="#606060"/></svg><svg class="a" width="8" height="5" viewBox="0 0 8 5" style="left:669px;top:102px"><path d="M0.5 0.5L4 4L7.5 0.5" fill="none" stroke="#a0a0a0" stroke-width="1"/></svg>
</body></html>
